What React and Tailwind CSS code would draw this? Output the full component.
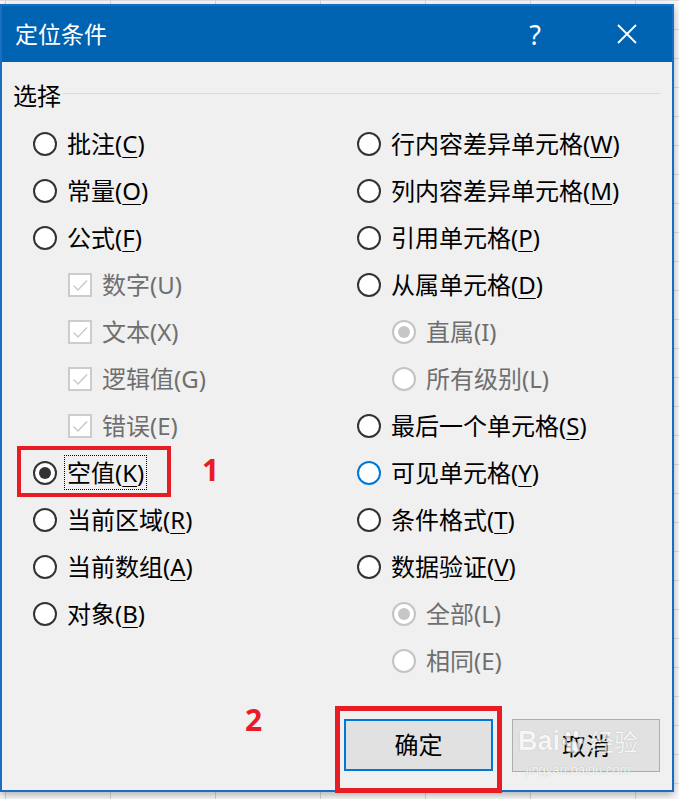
import React from "react";

const FONT = {
  fontFamily: '"Noto Sans", "Noto Sans CJK SC", sans-serif',
};

const leftItems = [
  { label: "批注", key: "C" },
  { label: "常量", key: "O" },
  { label: "公式", key: "F" },
  { label: "数字", key: "U", kind: "check" },
  { label: "文本", key: "X", kind: "check" },
  { label: "逻辑值", key: "G", kind: "check" },
  { label: "错误", key: "E", kind: "check" },
  { label: "空值", key: "K", selected: true, focus: true },
  { label: "当前区域", key: "R" },
  { label: "当前数组", key: "A" },
  { label: "对象", key: "B" },
];

const rightItems = [
  { label: "行内容差异单元格", key: "W" },
  { label: "列内容差异单元格", key: "M" },
  { label: "引用单元格", key: "P" },
  { label: "从属单元格", key: "D" },
  { label: "直属", key: "I", kind: "subradio", selected: true },
  { label: "所有级别", key: "L", kind: "subradio" },
  { label: "最后一个单元格", key: "S" },
  { label: "可见单元格", key: "Y", hover: true },
  { label: "条件格式", key: "T" },
  { label: "数据验证", key: "V" },
  { label: "全部", key: "L", kind: "subradio", selected: true },
  { label: "相同", key: "E", kind: "subradio" },
];

const Radio = ({ selected, disabled, hover }) => {
  const ring = disabled
    ? "border-[#c4c4c4]"
    : hover
    ? "border-[#0078d7]"
    : "border-[#333333]";
  const dot = disabled ? "bg-[#c6c6c6]" : "bg-[#333333]";
  return (
    <span
      className={`w-[24px] h-[24px] shrink-0 rounded-full border-2 bg-white flex items-center justify-center ${ring}`}
    >
      {selected && <span className={`w-[12px] h-[12px] rounded-full ${dot}`}></span>}
    </span>
  );
};

const Check = () => (
  <span className="w-[24px] h-[24px] shrink-0 border-2 border-[#cccccc] bg-white flex items-center justify-center">
    <svg width="18" height="18" viewBox="0 0 18 18">
      <polyline
        points="2.5,9.5 7,14 16,4.5"
        fill="none"
        stroke="#c8c8c8"
        strokeWidth="1.4"
      />
    </svg>
  </span>
);

const Option = ({ item }) => {
  const sub = item.kind === "check" || item.kind === "subradio";
  const text = sub ? (
    <span className="text-[#6f6f6f]">
      {item.label}({item.key})
    </span>
  ) : (
    <span
      className={
        item.focus
          ? "border border-dotted border-black px-[2px] -ml-[3px] h-[35px] flex items-center"
          : ""
      }
    >
      {item.label}(
      <span className="underline underline-offset-[4px] decoration-1">{item.key}</span>)
    </span>
  );
  return (
    <div className={`h-[47px] flex items-center gap-[10px] ${sub ? "pl-[35px]" : ""}`}>
      {item.kind === "check" ? (
        <Check />
      ) : (
        <Radio
          selected={item.selected}
          disabled={item.kind === "subradio"}
          hover={item.hover}
        />
      )}
      <span className="text-[24px] leading-none text-black">{text}</span>
    </div>
  );
};

const App = () => {
  return (
    <div
      className="relative w-[679px] h-[799px] overflow-hidden bg-[#fafafa] bg-[linear-gradient(to_right,#d6d6d6_1px,transparent_1px),linear-gradient(to_bottom,#dedede_1px,transparent_1px)] bg-[size:105px_100%,100%_29px] bg-[position:5px_0,0_0]"
      style={FONT}
    >
      <div className="w-[674px] h-[788px] mt-[4px] flex flex-col border-2 border-[#1a6dbf] bg-[#f0f0f0] shadow-[0_3px_8px_rgba(0,0,0,0.3)]">
        {/* title bar */}
        <div className="h-[56px] bg-[#0063b1] flex items-center pl-[13px] pr-[25px] text-white">
          <span className="text-[23px] leading-none">定位条件</span>
          <span className="flex-1"></span>
          <span className="w-[24px] text-center text-[27px] leading-none">?</span>
          <span className="w-[40px] ml-[60px] flex items-center justify-center">
            <svg width="20" height="20" viewBox="0 0 20 20">
              <path d="M1 1 L19 19 M19 1 L1 19" stroke="white" strokeWidth="1.8" />
            </svg>
          </span>
        </div>

        {/* body */}
        <div className="flex-1 flex flex-col">
          <div className="mt-[18px] h-[32px] flex items-center pl-[11px] pr-[12px]">
            <span className="text-[24px] leading-none text-black">选择</span>
            <span className="flex-1 h-px bg-[#dadada] ml-[2px] mb-[6px]"></span>
          </div>

          <div className="mt-[8px] pl-[31px] grid grid-cols-[324px_1fr]">
            <div className="flex flex-col">
              {leftItems.map((item, i) => (
                <Option key={i} item={item} />
              ))}
            </div>
            <div className="flex flex-col">
              {rightItems.map((item, i) => (
                <Option key={i} item={item} />
              ))}
            </div>
          </div>

          <div className="mt-[35px] flex justify-end gap-[19px] pr-[12px]">
            <button className="w-[149px] h-[52px] bg-[#e1e1e1] border-2 border-[#0078d7] text-[24px] leading-none text-black">
              确定
            </button>
            <button className="w-[148px] h-[53px] bg-[#e1e1e1] border border-[#adadad] text-[24px] leading-none text-black">
              取消
            </button>
          </div>
        </div>
      </div>

      {/* annotations */}
      <div className="absolute left-[17px] top-[446px] w-[154px] h-[51px] border-4 border-[#e81c24] pointer-events-none"></div>
      <span className="absolute left-[202px] top-[455px] text-[30px] leading-none font-bold text-[#e81c24]">1</span>
      <div className="absolute left-[335px] top-[706px] w-[167px] h-[87px] border-[5px] border-[#e81c24] pointer-events-none"></div>
      <span className="absolute left-[245px] top-[705px] text-[30px] leading-none font-bold text-[#e81c24]">2</span>

      {/* watermark */}
      <div className="absolute left-[518px] top-[728px] pointer-events-none flex flex-col items-center opacity-70 [text-shadow:0_0_1px_#999]">
        <div className="flex items-center text-white">
          <span className="text-[27px] font-bold leading-none" style={{ fontFamily: '"Liberation Sans", sans-serif' }}>
            Bai
          </span>
          <svg width="26" height="26" viewBox="0 0 26 26" className="mx-[1px]">
            <g fill="white" stroke="#aaa" strokeWidth="0.6">
              <ellipse cx="7" cy="6" rx="3" ry="4" />
              <ellipse cx="15" cy="5" rx="3" ry="4" />
              <ellipse cx="3.5" cy="13" rx="2.5" ry="3.2" />
              <ellipse cx="20" cy="12" rx="2.5" ry="3.2" />
              <path d="M5 22 C5 15 9 12 12 12 C16 12 19 16 19 22 C15 24 9 24 5 22 Z" />
            </g>
          </svg>
          <span className="text-[24px] leading-none ml-[2px]">经验</span>
        </div>
        <span className="text-[13px] leading-none mt-[8px] text-white" style={{ fontFamily: '"Liberation Sans", sans-serif' }}>
          jingyan.baidu.com
        </span>
      </div>
    </div>
  );
};

export default App;
